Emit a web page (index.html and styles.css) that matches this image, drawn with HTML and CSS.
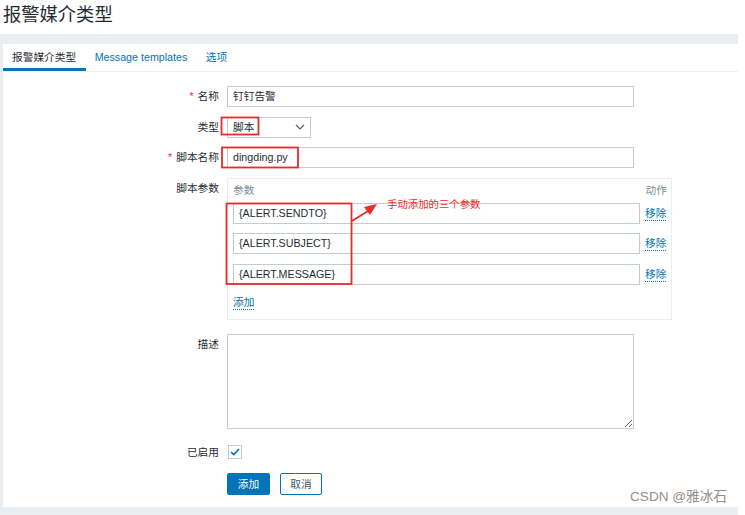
FILE: index.html
```html
<!DOCTYPE html>
<html lang="zh">
<head>
<meta charset="utf-8">
<title>报警媒介类型</title>
<link rel="stylesheet" href="styles.css">
</head>
<body>
<div class="page">
  <h1 class="title">报警媒介类型</h1>
  <div class="frame">
    <div class="card">
      <nav class="tabs">
        <a class="tab active">报警媒介类型</a>
        <a class="tab">Message templates</a>
        <a class="tab">选项</a>
      </nav>
      <form class="form">
        <label class="lbl"><span class="req">*</span>名称</label>
        <div class="field"><div class="input wide">钉钉告警</div></div>

        <label class="lbl">类型</label>
        <div class="field">
          <div class="input select">脚本
            <svg class="chev" width="10" height="6" viewBox="0 0 10 6"><path d="M1 1 L5 5 L9 1" fill="none" stroke="#4f5f68" stroke-width="1.2"/></svg>
          </div>
        </div>

        <label class="lbl"><span class="req">*</span>脚本名称</label>
        <div class="field"><div class="input wide">dingding.py</div></div>

        <label class="lbl">脚本参数</label>
        <div class="field">
          <div class="params">
            <div class="phead">参数</div>
            <div class="phead right">动作</div>
            <div class="input">{ALERT.SENDTO}</div>
            <a class="link">移除</a>
            <div class="input">{ALERT.SUBJECT}</div>
            <a class="link">移除</a>
            <div class="input">{ALERT.MESSAGE}</div>
            <a class="link">移除</a>
            <div class="add"><a class="link">添加</a></div>
          </div>
        </div>

        <label class="lbl desc-lbl">描述</label>
        <div class="field desc-field"><textarea class="textarea"></textarea></div>

        <label class="lbl chk-lbl">已启用</label>
        <div class="field chk-field">
          <span class="checkbox"><svg width="10" height="8" viewBox="0 0 10 8"><path d="M1 4 L3.8 6.6 L9 1" fill="none" stroke="#0275b8" stroke-width="1.6"/></svg></span>
        </div>

        <div></div>
        <div class="field buttons">
          <button type="button" class="btn primary">添加</button>
          <button type="button" class="btn alt">取消</button>
        </div>
      </form>
    </div>
  </div>

  <svg class="marks" width="745" height="515" viewBox="0 0 745 515">
    <rect x="221.5" y="117.5" width="37" height="17" fill="none" stroke="#ec2a2a" stroke-width="1.8"/>
    <rect x="222" y="147.5" width="76" height="20" fill="none" stroke="#ec2a2a" stroke-width="1.8"/>
    <rect x="226.5" y="203.5" width="125" height="80.5" fill="none" stroke="#ec2a2a" stroke-width="1.8"/>
    <line x1="352" y1="221" x2="368" y2="211" stroke="#ec2a2a" stroke-width="1.8"/>
    <polygon points="377,204 364,207 370,215" fill="#ec2a2a"/>
  </svg>
  <div class="note">手动添加的三个参数</div>
  <div class="watermark">CSDN @雅冰石</div>
</div>
</body>
</html>
```
FILE: styles.css
```css
* { box-sizing: border-box; }
html, body { margin: 0; padding: 0; background: #ffffff; }
body {
  font-family: "Liberation Sans", Arial, "Noto Sans CJK SC", sans-serif;
  font-size: 10.7px;
  color: #1f2c33;
}
.page { position: relative; width: 745px; height: 515px; overflow: hidden; }
.title {
  margin: 0;
  height: 34px;
  padding: 1px 0 0 3px;
  font-family: "Noto Sans CJK SC", sans-serif;
  font-weight: 400;
  font-size: 18.3px;
  line-height: 24px;
  color: #1f2c33;
}
.frame {
  width: 738px;
  height: 481px;
  background: #ebeef0;
  padding: 10px 0 8px 3px;
}
.card { background: #ffffff; height: 463px; }
.tabs {
  display: flex;
  height: 28px;
  border-bottom: 1px solid #eef0f2;
}
.tab {
  display: block;
  padding: 0 9.5px 0 9px;
  line-height: 26px;
  color: #0275b8;
  border-bottom: 3px solid transparent;
  white-space: nowrap;
}
.tab.active { color: #1f2c33; border-bottom-color: #0a76b7; }
.form {
  display: grid;
  grid-template-columns: 216px 407px;
  column-gap: 8px;
  row-gap: 9.5px;
  padding-top: 14px;
  margin: 0;
}
.lbl {
  text-align: right;
  line-height: 21px;
  color: #1f2c33;
  white-space: nowrap;
}
.req { color: #e33734; margin-right: 4px; }
.field { display: flex; align-items: flex-start; }
.input {
  height: 21px;
  line-height: 19px;
  border: 1px solid #c3ccd1;
  background: #ffffff;
  padding: 0 5px;
  color: #1f2c33;
  white-space: nowrap;
  flex-shrink: 0;
}
.input.wide { width: 407px; }
.select {
  width: 84px;
  display: flex;
  align-items: center;
  justify-content: space-between;
  padding-right: 5px;
}
.chev { display: block; }
.params {
  flex-shrink: 0;
  width: 445px;
  border: 1px solid #ebeef0;
  display: grid;
  grid-template-columns: 407px 1fr;
  column-gap: 5px;
  row-gap: 9.5px;
  padding: 0 4px 6px 5px;
}
.phead { color: #768d99; line-height: 16px; padding-top: 3px; margin-bottom: -4.5px; white-space: nowrap; }
.phead.right { text-align: right; }
.link {
  color: #0275b8;
  text-decoration: none;
  border-bottom: 1px dotted #0275b8;
  align-self: center;
  line-height: 14px;
  justify-self: start;
  white-space: nowrap;
}
.add { grid-column: 1 / 3; height: 21px; display: flex; align-items: center; margin-top: -2px; }
.desc-lbl, .desc-field { margin-top: 4.5px; }
.textarea {
  width: 407px;
  height: 95px;
  border: 1px solid #c3ccd1;
  margin: 0;
  padding: 4px 5px;
  font: inherit;
  resize: both;
  display: block;
  flex-shrink: 0;
}
.chk-lbl, .chk-field { margin-top: 3px; }
.chk-field { height: 21px; align-items: center; }
.checkbox {
  width: 14px;
  height: 14px;
  border: 1px solid #c3ccd1;
  margin-left: 1px;
  display: flex;
  align-items: center;
  justify-content: center;
}
.buttons { gap: 10px; margin-top: 1px; }
.btn {
  height: 22px;
  padding: 0;
  margin: 0;
  font-family: "Noto Sans CJK SC", sans-serif;
  font-size: 10.7px;
  line-height: 20px;
  border-radius: 2px;
  cursor: pointer;
}
.btn.primary { width: 43px; background: #0275b8; border: 1px solid #0275b8; color: #ffffff; }
.btn.alt { width: 42px; background: #ffffff; border: 1px solid #0275b8; color: #3d5566; }
.marks { position: absolute; left: 0; top: 0; pointer-events: none; }
.note {
  position: absolute;
  left: 387px;
  top: 197px;
  font-family: "Noto Sans CJK SC", sans-serif;
  font-size: 10.4px;
  line-height: 14px;
  color: #ec2a2a;
}
.watermark {
  position: absolute;
  left: 630px;
  top: 489px;
  font-size: 13.6px;
  line-height: 16px;
  color: #8f8f8f;
}
```
